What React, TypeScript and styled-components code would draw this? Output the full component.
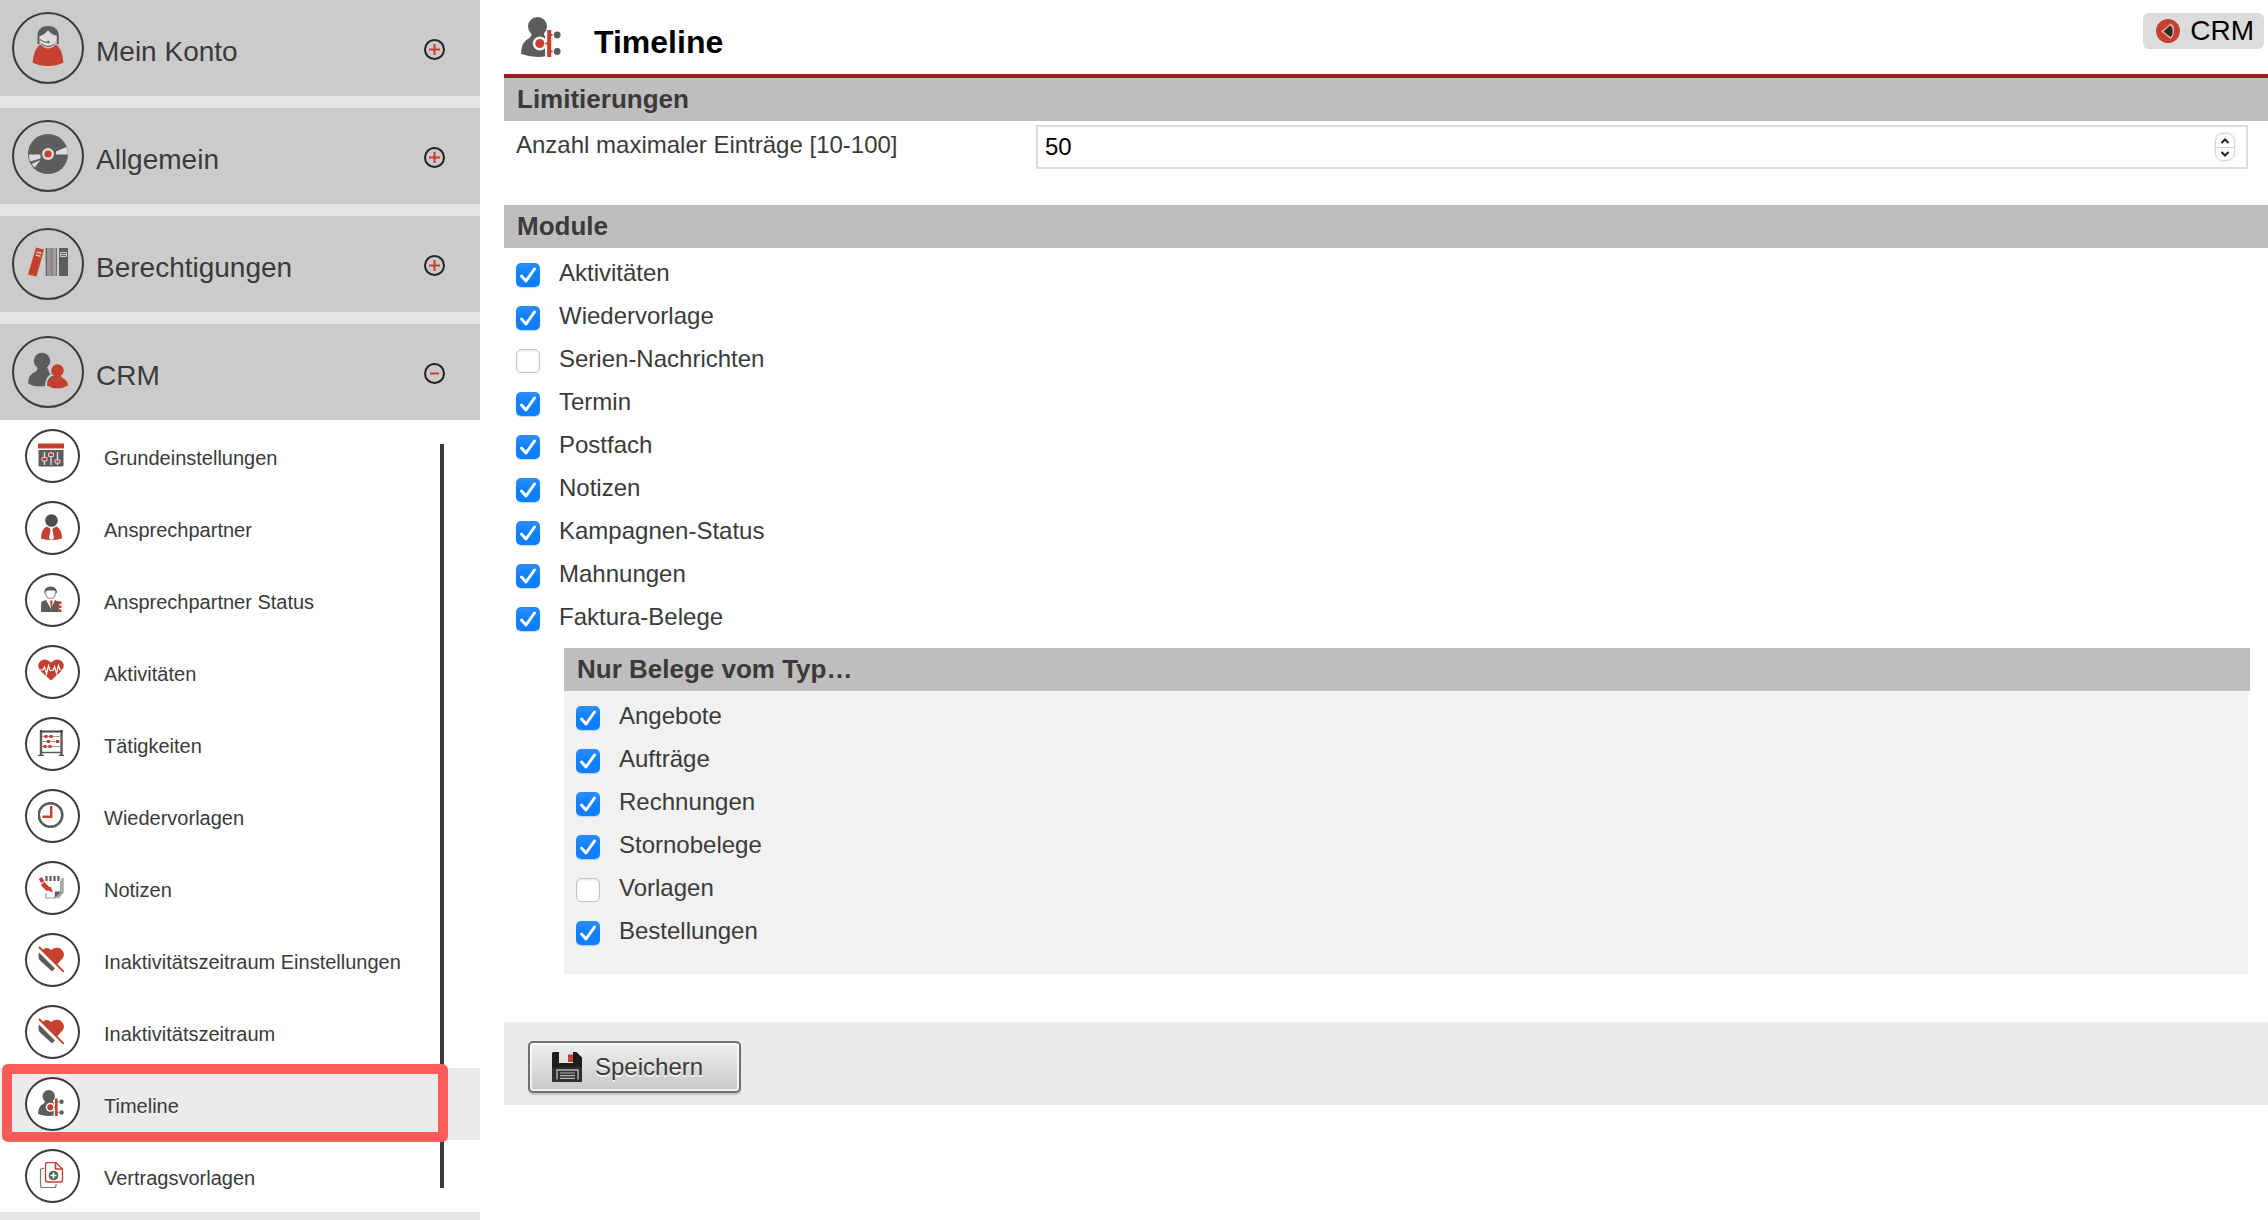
import React, { useState } from "react";
import styled, { createGlobalStyle, css } from "styled-components";

const c = {
  text: "#3a3a3a",
  grey: "#5c5c5c",
  red: "#c5402f",
  darkRed: "#9d1c19",
  bar: "#bfbdbd",
  group: "#cbcbcb",
  gap: "#e5e5e5",
  soft: "#ebebeb",
  panel: "#f1f1f1",
  mark: "#ff5a5a",
};

const Global = createGlobalStyle`
  *, *::before, *::after { box-sizing: border-box; }
  body {
    margin: 0;
    background: #fff;
    color: ${c.text};
    font-family: "Liberation Sans", Arial, Helvetica, sans-serif;
    font-size: 24px;
    line-height: 28px;
  }
  button, input { font: inherit; color: inherit; }
  svg { display: block; }
`;

const Page = styled.div`
  display: grid;
  grid-template-columns: 480px minmax(0, 1fr);
  column-gap: 24px;
  height: 100vh;
  overflow: hidden;
`;

/* ---------- sidebar ---------- */

const Sidebar = styled.nav`
  display: flex;
  flex-direction: column;
  background: ${c.gap};
`;

const GroupButton = styled.button`
  display: flex;
  align-items: center;
  gap: 12px;
  flex: none;
  width: 100%;
  height: 96px;
  padding: 0 35px 0 12px;
  border: 0;
  background: ${c.group};
  font-size: 28px;
  line-height: 32px;
  text-align: left;
  cursor: pointer;
`;

const Groups = styled.div`
  display: flex;
  flex-direction: column;
  gap: 12px;
`;

const GroupIcon = styled.span`
  display: grid;
  place-items: center;
  width: 72px;
  height: 72px;
  padding-bottom: 4px;
  border: 2px solid ${c.text};
  border-radius: 50%;
`;

const GroupLabel = styled.span`
  flex: 1;
  padding-top: 8px;
`;

const GroupToggle = styled.span`
  padding-top: 3px;
`;

const ItemList = styled.ul`
  position: relative;
  margin: 0;
  padding: 0;
  list-style: none;
  background: #fff;

  &::after {
    content: "";
    position: absolute;
    top: 24px;
    right: 36px;
    bottom: 24px;
    width: 4px;
    background: ${c.text};
  }
`;

const Item = styled.li<{ $active?: boolean }>`
  position: relative;
  background: ${(p) => (p.$active ? c.soft : "transparent")};

  ${(p) =>
    p.$active &&
    css`
      &::after {
        content: "";
        position: absolute;
        z-index: 1;
        inset: -4px 32px -2px 2px;
        border: 10px solid ${c.mark};
        border-radius: 6px;
        pointer-events: none;
      }
    `}
`;

const ItemLink = styled.a`
  display: flex;
  align-items: center;
  gap: 24px;
  height: 72px;
  padding-left: 25px;
  color: inherit;
  font-size: 20px;
  line-height: 24px;
  text-decoration: none;
`;

const ItemIcon = styled.span`
  width: 55px;
  height: 54px;
  padding: 11px;
  border: 2px solid ${c.text};
  border-radius: 50%;
  background: #fff;
`;

const ItemLabel = styled.span`
  padding-top: 4px;
`;

/* ---------- main ---------- */

const Main = styled.main`
  display: flex;
  flex-direction: column;
`;

const Header = styled.header`
  display: flex;
  align-items: center;
  height: 78px;
  padding: 0 4px 0 17px;
  border-bottom: 4px solid ${c.darkRed};
`;

const Title = styled.h1`
  flex: 1;
  margin: 0;
  padding: 10px 0 0 33px;
  color: #000;
  font-size: 32px;
  line-height: 36px;
`;

const Badge = styled.a`
  display: flex;
  align-items: center;
  align-self: flex-start;
  gap: 10px;
  height: 36px;
  margin-top: 13px;
  padding: 0 10px 0 13px;
  border-radius: 6px;
  background: #dcdcdc;
  color: #000;
  font-size: 28px;
  line-height: 36px;
  text-decoration: none;
`;

const Bar = styled.h2`
  margin: 0;
  padding: 6px 13px 7px;
  background: ${c.bar};
  font-size: 26px;
  line-height: 30px;
`;

const LimitRow = styled.div`
  display: grid;
  grid-template-columns: 520px minmax(0, 1fr);
  padding: 4px 20px 36px 12px;
`;

const LimitLabel = styled.label`
  padding-top: 6px;
`;

const NumberField = styled.div`
  display: flex;
  align-items: center;
  height: 44px;
  padding-right: 11px;
  border: 2px solid #dcdcdc;
`;

const NumberInput = styled.input`
  flex: 1;
  min-width: 0;
  height: 40px;
  padding: 0 7px;
  border: 0;
  outline: 0;
  background: transparent;
  color: #000;
  appearance: textfield;

  &::-webkit-inner-spin-button {
    appearance: none;
    margin: 0;
  }
`;

const Stepper = styled.div`
  display: flex;
  flex-direction: column;
  width: 20px;
  border: 1px solid #d4d4d4;
  border-radius: 8px;
  box-shadow: 0 0 2px rgba(0, 0, 0, 0.15);
`;

const StepButton = styled.button`
  display: grid;
  place-items: center;
  height: 13px;
  padding: 0;
  border: 0;
  background: transparent;

  & + & {
    border-top: 1px solid #d4d4d4;
  }
`;

const LimitSection = styled.section`
  height: 127px;
`;

const CheckList = styled.div`
  display: grid;
  grid-auto-rows: 43px;
  padding: 5px 12px 8px;
`;

const NestedBox = styled.section`
  margin: 0 18px 0 60px;
`;

const NestedBody = styled.div`
  margin-right: 2px;
  padding-bottom: 12px;
  background: ${c.panel};
`;

const CheckRow = styled.label`
  display: flex;
  align-items: center;
  gap: 19px;
  justify-self: start;
`;

const CheckLabel = styled.span`
  padding-bottom: 3px;
`;

const CheckFrame = styled.span`
  display: grid;
  width: 24px;
  height: 24px;

  & > * {
    grid-area: 1 / 1;
  }

  & > svg {
    pointer-events: none;
  }
`;

const CheckInput = styled.input`
  appearance: none;
  width: 24px;
  height: 24px;
  margin: 0;
  border: 1px solid #c4c4c4;
  border-radius: 5px;
  background: #fff;
  box-shadow: inset 0 1px 2px rgba(0, 0, 0, 0.12);

  &:checked {
    border: 0;
    background: linear-gradient(#2c8dfb, #0f7fff 50%);
    box-shadow: 0 1px 1px rgba(15, 127, 255, 0.3);
  }
`;

const Footer = styled.footer`
  margin-top: 48px;
  padding: 19px 24px 12px;
  background: ${c.soft};
`;

const SaveButton = styled.button`
  display: flex;
  align-items: center;
  gap: 13px;
  height: 52px;
  padding: 0 36px 0 22px;
  border: 2px solid #707070;
  border-radius: 5px;
  background: linear-gradient(#efefef, #c8c8c8);
  box-shadow: inset 0 0 0 2px rgba(255, 255, 255, 0.7), 0 2px 1px #c4c4c4;
  text-shadow: 0 2px 0 rgba(255, 255, 255, 0.8);
`;

/* ---------- drawings ---------- */

const Svg = ({ size, box = size, children }: { size: number; box?: number; children: React.ReactNode }) => (
  <svg width={size} height={size} viewBox={`0 0 ${box} ${box}`} fill="none" aria-hidden="true">
    {children}
  </svg>
);

const WomanIcon = () => (
  <Svg size={40}>
    <path d="M9.500 18V10C9.500 3 14 0 20 0s10.800 3 10.800 10v8l-2 .5V10q-4-1-8.800-5.500Q16 9 11.500 10.500v8z" fill={c.grey} />
    <path d="M11.500 10.500Q17 9 20 4.500q3.500 4.500 8.800 5.500c0 6-4 9.500-8.800 9.500s-8.500-4-8.500-9z" fill="#dcdcdc" />
    <path d="M12 13.500q4 3.500 8.500 2.800M13.500 18q6.500 5 13 0" stroke={c.grey} strokeWidth="1" />
    <circle cx="20.500" cy="16" r="1.200" fill={c.grey} />
    <path d="M12.500 18.500q7.500 8 15.500 0Q34 22 35.500 36.500 29 40 20 40T4.500 36.500Q6 22 12.500 18.500z" fill={c.red} />
  </Svg>
);

const DiscIcon = () => (
  <Svg size={40}>
    <circle cx="20" cy="20" r="20" fill={c.grey} />
    <path d="M28 17.500 38.500 13q1.500 4 1.300 7.500H28z" fill="#dcdcdc" />
    <path d="M12.500 20.500H1q0 4 1 7l10.500-3z" fill="#dcdcdc" />
    <path d="M12.500 26 3.500 30l3.200 3.500z" fill="#dcdcdc" />
    <circle cx="20" cy="20" r="6" fill="#dcdcdc" />
    <circle cx="20" cy="20" r="3.600" fill={c.red} />
  </Svg>
);

const BindersIcon = () => (
  <Svg size={40}>
    <path d="M8 5.500 16 7.500 8.500 34.500 0 32.500z" fill={c.red} />
    <path d="m8.500 10 5 1.200M7.700 13l5 1.200" stroke="#e8c4bf" strokeWidth="1.400" />
    <path d="M18 6h5v28h-5z" fill="#9a9593" />
    <path d="M18.300 6v28M24 6v28M28.200 6v28" stroke={c.grey} strokeWidth="1.200" />
    <path d="M26 6v28" stroke="#9a9593" strokeWidth="1.600" />
    <path d="M31 6h9v28h-9z" fill={c.grey} />
    <path d="M32.500 10.500h6v4h-6z" stroke="#c9c9c9" />
    <path d="M32.500 12.500h6" stroke="#c9c9c9" />
  </Svg>
);

const PeopleIcon = () => (
  <Svg size={40}>
    <circle cx="14" cy="11" r="8.200" fill={c.grey} />
    <path d="M9.500 16h9q1 4 5 6 2.500 3 2.500 6l-7 8Q6 37.500 0 33.500 0 24 8 21.500q2-2 1.500-5.500z" fill={c.grey} />
    <path d="M18 37q-.5-10 7-12.500M23 16a6.800 6.800 0 0 0 0 8" stroke={c.group} strokeWidth="2" />
    <circle cx="29.500" cy="20.500" r="6.200" fill={c.red} />
    <path d="M26.500 25h6q.5 2.500 3.500 4 4 2 4 6.500-5 3-10.500 3T19 35.500Q19 31 23 29q3-1.500 3.500-4z" fill={c.red} />
  </Svg>
);

const ToggleIcon = ({ open }: { open: boolean }) => (
  <Svg size={21}>
    <circle cx="10.500" cy="10.500" r="9.500" stroke="#222" strokeWidth="2" />
    <path d={open ? "M6 10.500h9" : "M5 10.500h11M10.500 5v11"} stroke={c.red} strokeWidth="2" />
  </Svg>
);

const SlidersIcon = () => (
  <Svg size={26}>
    <path d="M0 1.500h26v5H0z" fill={c.red} />
    <path d="M.500 8h25v15.500q0 1-1 1h-23q-1 0-1-1z" fill={c.grey} />
    <path d="M6.500 10v13M13 10v13M19.500 10v13" stroke="#ddd" strokeWidth="1.400" />
    <path d="M4 15.500h5v3.500H4zM10.500 11h5v3.500h-5zM17 18h5v3h-5z" fill={c.red} stroke="#eee" strokeWidth=".8" />
  </Svg>
);

const ContactIcon = () => (
  <Svg size={26}>
    <circle cx="13.500" cy="6.500" r="6.300" fill="#4d4d4d" />
    <path d="M8.500 12.500q5 3 10 0 5.500 3 5.500 12Q19 26 13.500 26T3 24.500q0-9 5.500-12z" fill={c.red} />
    <path d="M11.500 13.500h4l-1 2.500 1.500 8.500-2.500 1.500-2.500-1.500L12.500 16z" fill="#fff" />
  </Svg>
);

const StatusIcon = () => (
  <Svg size={26}>
    <path d="M6.500 8Q5.500.5 12.500.5T19 8q-1-3-3-3.500H9.500Q7.500 5 6.500 8z" fill={c.grey} />
    <path d="M7.500 6q0 6.500 5 6.500t5-6.500" stroke="#999" strokeWidth="1.200" />
    <path d="M8 14 3.500 15.500Q3 18 3 26h17V15.500L17 14l-4 9z" fill={c.grey} />
    <path d="M12 14.500h2.500l-.5 8h-1z" fill={c.red} />
    <path d="M21 15.500h2.500v2.500H21zM21 19.500h2.500V22H21zM21 23.500h2.500V26H21z" fill={c.red} />
    <path d="M20.500 15v11" stroke={c.red} strokeWidth="1.500" />
  </Svg>
);

const HEART = "M13 22.500 2 12.500Q-1.500 7.500 2 3.500q5-4.500 11 1 6-5.500 11-1 3.500 4 0 9z";

const PulseIcon = () => (
  <Svg size={26}>
    <path d={HEART} fill={c.red} />
    <path d="M0 12h5l1.500-3 2 7 2-8.500 1.500 5h3l1.500-4 2 7 2-8 1.500 4.500h4" stroke="#fff" strokeWidth="1.200" />
  </Svg>
);

const AbacusIcon = () => (
  <Svg size={26}>
    <path d="M3 0v25M23.500 0v25" stroke={c.grey} strokeWidth="2.400" />
    <path d="M2 1.500h22.500" stroke="#444" strokeWidth="2" />
    <path d="M3 22.500h20.500M0 25.500h6M20.500 25.500h6" stroke={c.grey} strokeWidth="1.400" />
    <path d="M4 6.500h19M4 11.500h19M4 16.500h19" stroke="#999" strokeWidth="1" />
    <path d="M6.500 5h3v3h-3zM11.500 5h3v3h-3zM9 10h3v3H9zM18 10h3v3h-3zM5.500 15h3v3h-3zM10.500 15h3v3h-3z" fill={c.red} />
  </Svg>
);

const ClockIcon = () => (
  <Svg size={26}>
    <circle cx="12.500" cy="13" r="11.800" stroke={c.grey} strokeWidth="2.600" />
    <path d="M13.200 4v10.700H4.500" stroke={c.red} strokeWidth="2.400" />
  </Svg>
);

const NotesIcon = () => (
  <Svg size={26}>
    <path d="M8.500 2v5M12.500 2v5M16.500 2v5M20.500 2v5" stroke={c.grey} strokeWidth="2.200" />
    <path d="M24.500 4v14l-5 6" stroke="#aaa5a3" strokeWidth="2.600" />
    <path d="M8 19v5h9.500l5-6V7" stroke="#999" strokeWidth="1.200" />
    <path d="M17 17.500h6L16.500 24z" fill={c.grey} />
    <path d="m2 7 3-2M4.500 9.500l6 6" stroke={c.red} strokeWidth="4.600" />
    <path d="m9 16 3.500-3.500 2.500 6z" fill={c.red} />
  </Svg>
);

const InactiveIcon = () => (
  <Svg size={26}>
    <path d="M4.500 4q4-4 8.500 0 5.500-4 10-1 5 4.500 1.500 9.500L18.500 19z" fill={c.red} />
    <path d="M1 6.500 17 22.500 14 25.500 1.500 14Q-.5 10 1 6.500z" fill={c.grey} />
    <path d="M1 1 26 26" stroke={c.red} strokeWidth="1.800" />
  </Svg>
);

const TimelineIcon = ({ size }: { size: number }) => (
  <Svg size={size} box={40}>
    <circle cx="16.500" cy="9.500" r="9.500" fill={c.grey} />
    <path d="M10.500 16h12q.5 3 3.500 4.500V39q-13 2.500-26-2Q0 24.500 8.500 21q2.500-2 2-5z" fill={c.grey} />
    <path d="M24 16h8v24h-8z" fill="#f4f4f4" />
    <circle cx="18.800" cy="26.500" r="7" fill="#f4f4f4" />
    <circle cx="18.800" cy="26.500" r="4.500" fill={c.red} />
    <path d="M28.200 13v27" stroke={c.red} strokeWidth="4" />
    <path d="M24.500 26.500h3M29 18h2.500M29 34.500h2.500" stroke={c.red} strokeWidth="1.800" />
    <circle cx="36.200" cy="18" r="3.400" fill={c.grey} />
    <circle cx="36.200" cy="34.500" r="3.400" fill={c.grey} />
  </Svg>
);

const ContractIcon = () => (
  <Svg size={26}>
    <path d="M6 6.500H4.500Q2.500 6.500 2.500 8.500v15q0 2 2 2H16q2 0 2-2V22" stroke="#777" strokeWidth="1.200" />
    <path d="M9.500.500H18l6.500 6.500v11q0 2-2 2h-13q-2 0-2-2v-15.500q0-2 2-2z" stroke={c.red} strokeWidth="1.300" fill="#fff" />
    <path d="M17.500.500v6.500h7" stroke={c.red} strokeWidth="1.600" />
    <circle cx="15.500" cy="13.500" r="4.800" fill={c.grey} />
    <path d="M12.500 13.500h6M15.500 10.500v6" stroke="#fff" strokeWidth="1.500" />
  </Svg>
);

const BackIcon = () => (
  <Svg size={24}>
    <circle cx="12" cy="12" r="12" fill={c.red} />
    <path d="M5 12.500 14.500 4.500q4 1.500 3.500 7.500 0 6-3.500 8z" fill="#e9a79e" />
    <path d="m7.500 12.500 6.500-6q3 2 2.500 5.500.500 4-2 6z" fill="#2b2b2b" />
  </Svg>
);

const DiskIcon = () => (
  <Svg size={30}>
    <path d="M1.500 0H7v11h14V0h3.500L30 5.500V29q0 1-1 1H1.500Q0 30 0 28.500v-27Q0 0 1.500 0z" fill="#1c1c1c" />
    <path d="M0 15h30v13.500q0 1.500-1.500 1.500h-27Q0 30 0 28.500z" fill="#2f2f2f" />
    <path d="M16 2.500h5V10h-5z" fill={c.red} />
    <path d="M5 27.500V18h21v9.500" stroke="#b5b5b5" strokeWidth="1.400" />
    <path d="M8 21h15M8 23.700h15M8 26.400h15" stroke="#b5b5b5" strokeWidth="1.200" />
  </Svg>
);

/* ---------- data ---------- */

const groups = [
  { label: "Mein Konto", icon: <WomanIcon /> },
  { label: "Allgemein", icon: <DiscIcon /> },
  { label: "Berechtigungen", icon: <BindersIcon /> },
  { label: "CRM", icon: <PeopleIcon />, open: true },
];

const items = [
  { label: "Grundeinstellungen", icon: <SlidersIcon /> },
  { label: "Ansprechpartner", icon: <ContactIcon /> },
  { label: "Ansprechpartner Status", icon: <StatusIcon /> },
  { label: "Aktivitäten", icon: <PulseIcon /> },
  { label: "Tätigkeiten", icon: <AbacusIcon /> },
  { label: "Wiedervorlagen", icon: <ClockIcon /> },
  { label: "Notizen", icon: <NotesIcon /> },
  { label: "Inaktivitätszeitraum Einstellungen", icon: <InactiveIcon /> },
  { label: "Inaktivitätszeitraum", icon: <InactiveIcon /> },
  { label: "Timeline", icon: <TimelineIcon size={26} />, active: true },
  { label: "Vertragsvorlagen", icon: <ContractIcon /> },
];

const modules: [string, boolean][] = [
  ["Aktivitäten", true],
  ["Wiedervorlage", true],
  ["Serien-Nachrichten", false],
  ["Termin", true],
  ["Postfach", true],
  ["Notizen", true],
  ["Kampagnen-Status", true],
  ["Mahnungen", true],
  ["Faktura-Belege", true],
];

const documentTypes: [string, boolean][] = [
  ["Angebote", true],
  ["Aufträge", true],
  ["Rechnungen", true],
  ["Stornobelege", true],
  ["Vorlagen", false],
  ["Bestellungen", true],
];

/* ---------- components ---------- */

const Check = ({ label, initial }: { label: string; initial: boolean }) => {
  const [on, setOn] = useState(initial);
  return (
    <CheckRow>
      <CheckFrame>
        <CheckInput type="checkbox" checked={on} onChange={() => setOn(!on)} />
        {on && (
          <Svg size={24}>
            <path d="M5.500 13 10 18 18.500 6" stroke="#fff" strokeWidth="3" strokeLinecap="round" strokeLinejoin="round" />
          </Svg>
        )}
      </CheckFrame>
      <CheckLabel>{label}</CheckLabel>
    </CheckRow>
  );
};

const Checks = ({ entries }: { entries: [string, boolean][] }) => (
  <CheckList>
    {entries.map(([label, on]) => (
      <Check key={label} label={label} initial={on} />
    ))}
  </CheckList>
);

const Limit = () => {
  const [value, setValue] = useState(50);
  const step = (by: number) => setValue((v) => Math.min(100, Math.max(10, v + by)));
  return (
    <LimitRow>
      <LimitLabel htmlFor="max-entries">Anzahl maximaler Einträge [10-100]</LimitLabel>
      <NumberField>
        <NumberInput
          id="max-entries"
          type="number"
          min={10}
          max={100}
          value={value}
          onChange={(e) => setValue(Number(e.target.value))}
        />
        <Stepper>
          <StepButton type="button" aria-label="Erhöhen" onClick={() => step(1)}>
            <svg width="10" height="6" viewBox="0 0 10 6" fill="none">
              <path d="M1.500 5 5 1.500 8.500 5" stroke="#222" strokeWidth="2" />
            </svg>
          </StepButton>
          <StepButton type="button" aria-label="Verringern" onClick={() => step(-1)}>
            <svg width="10" height="6" viewBox="0 0 10 6" fill="none">
              <path d="M1.500 1 5 4.500 8.500 1" stroke="#222" strokeWidth="2" />
            </svg>
          </StepButton>
        </Stepper>
      </NumberField>
    </LimitRow>
  );
};

export default function App() {
  return (
    <>
      <Global />
      <Page>
        <Sidebar>
          <Groups>
            {groups.map((g) => (
              <GroupButton key={g.label} type="button" aria-expanded={!!g.open}>
                <GroupIcon>{g.icon}</GroupIcon>
                <GroupLabel>{g.label}</GroupLabel>
                <GroupToggle>
                  <ToggleIcon open={!!g.open} />
                </GroupToggle>
              </GroupButton>
            ))}
          </Groups>
          <ItemList>
            {items.map((i) => (
              <Item key={i.label} $active={i.active}>
                <ItemLink href="#" aria-current={i.active ? "page" : undefined}>
                  <ItemIcon>{i.icon}</ItemIcon>
                  <ItemLabel>{i.label}</ItemLabel>
                </ItemLink>
              </Item>
            ))}
          </ItemList>
        </Sidebar>
        <Main>
          <Header>
            <TimelineIcon size={40} />
            <Title>Timeline</Title>
            <Badge href="#">
              <BackIcon />
              CRM
            </Badge>
          </Header>
          <LimitSection>
            <Bar>Limitierungen</Bar>
            <Limit />
          </LimitSection>
          <Bar>Module</Bar>
          <Checks entries={modules} />
          <NestedBox>
            <Bar>Nur Belege vom Typ…</Bar>
            <NestedBody>
              <Checks entries={documentTypes} />
            </NestedBody>
          </NestedBox>
          <Footer>
            <SaveButton type="button">
              <DiskIcon />
              Speichern
            </SaveButton>
          </Footer>
        </Main>
      </Page>
    </>
  );
}
